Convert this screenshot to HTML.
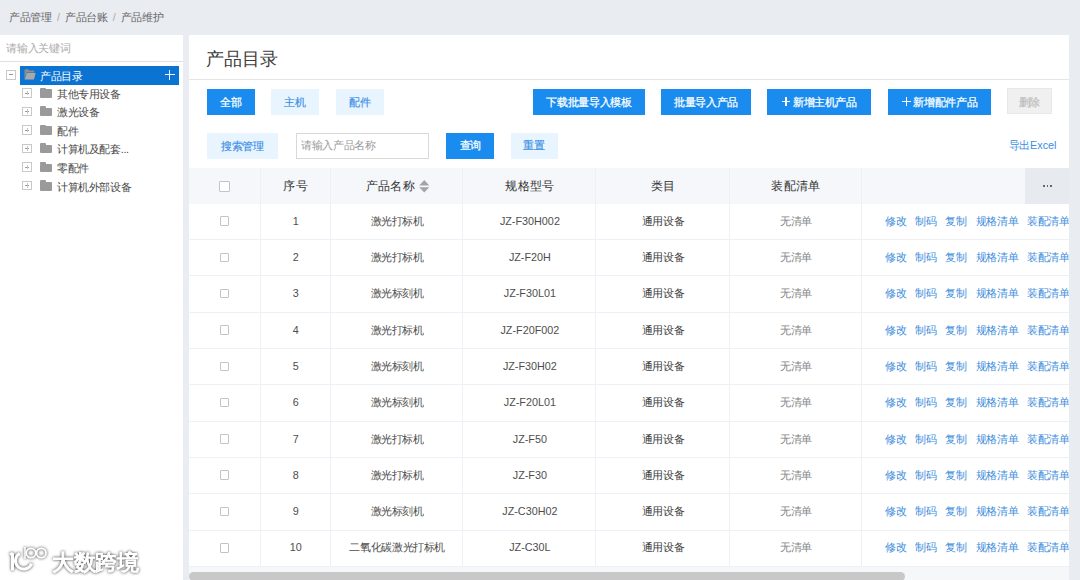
<!DOCTYPE html><html><head><meta charset="utf-8"><style>
*{box-sizing:border-box;margin:0;padding:0}
html,body{width:1080px;height:580px;overflow:hidden;background:#e9ecf1;font-family:"Liberation Sans",sans-serif;font-size:10.8px;letter-spacing:-0.35px;color:#606266}
.lat{letter-spacing:0}
.abs{position:absolute}
.sl{color:#aaa;margin:0 5.3px}
.crumb{left:9px;top:8px;line-height:18px;color:#666;white-space:pre}
#left{left:0;top:35px;width:183.3px;height:545px;background:#fff}
#left .ph{left:6.3px;top:4px;line-height:18px;color:#aaa}
#left .sep{left:0;top:26px;width:183.3px;height:1px;background:#dcdfe6}
.node{position:absolute;height:18px;line-height:18px;white-space:nowrap;color:#4a4a4a}
.selbg{position:absolute;background:#0b74d2}
.box{position:absolute;width:9.5px;height:9.5px;border:1px solid #c9c9c9;background:#fff}
.box:before{content:"";position:absolute;left:1.5px;right:1.5px;top:3.4px;height:1px;background:#999}
.box.p:after{content:"";position:absolute;top:1.5px;bottom:1.5px;left:3.4px;width:1px;background:#c4c4c4}
.fold{position:absolute;width:12.3px;height:8.6px;background:#9a9a9a;border-radius:1px}
.fold:before{content:"";position:absolute;left:0;top:-1.7px;width:6px;height:2.5px;background:#9a9a9a;border-radius:1px 1px 0 0}
#right{left:189.3px;top:35px;width:880.2px;height:545px;background:#fff;overflow:hidden}
.title{left:17px;top:9px;font-size:18px;line-height:30px;color:#3d3d3d;letter-spacing:0}
.tsep{left:0;top:44.4px;width:100%;height:1px;background:#e6e6e6}
.btn{position:absolute;height:26.3px;line-height:26.3px;text-align:center;white-space:nowrap}
.pri{background:#1a8cf0;color:#fff;-webkit-text-stroke:0.25px #fff}
.lt{background:#e8f4fe;color:#3a8ee6;-webkit-text-stroke:0.15px #3a8ee6}
.dis{background:#f0f0f0;color:#bdbdbd;border:1px solid #e8e8e8;-webkit-text-stroke:0.2px #bdbdbd}
.inp{position:absolute;border:1px solid #d9d9d9;color:#999;line-height:24px;padding-left:4.2px}
.link{position:absolute;color:#3a8ee6;right:13px;line-height:18px}
.th{position:absolute;top:133.2px;height:35.3px;background:#f5f7fa}
.thd{position:absolute;top:133.2px;height:35.3px;background:#e7eaef}
.vl{position:absolute;width:1px;background:#edf0f5}
.hl{position:absolute;height:1px;background:#edf0f5;left:0}
.c{position:absolute;text-align:center;white-space:nowrap;line-height:18px;color:#4d4d4d}
.hd{color:#333;font-size:12.4px;letter-spacing:0.3px}
.cb{position:absolute;width:9.5px;height:9.5px;border:1px solid #c0c4cc;background:#fff;border-radius:1px}
.act{position:absolute;color:#3d8ddc;white-space:nowrap;line-height:18px}
.pl{position:absolute;left:14.3px;top:8.8px;width:8.8px;height:8.8px}
.pl:before{content:'';position:absolute;left:0;right:0;top:3.75px;height:1.3px;background:#fff}
.pl:after{content:'';position:absolute;top:0;bottom:0;left:3.75px;width:1.3px;background:#fff}
.sb{position:absolute;left:0;top:537px;width:715px;height:9px;background:#c8c8c8;border-radius:5px}
</style></head><body><div class="abs crumb">产品管理<span class="sl">/</span>产品台账<span class="sl">/</span>产品维护</div>
<div id="left" class="abs"><div class="abs ph">请输入关键词</div><div class="abs sep"></div><div class="box" style="left:6.2px;top:35px;width:9.7px;height:9.7px"></div><div class="selbg" style="left:20.2px;top:31.2px;width:158.6px;height:18.6px"></div><svg class="abs" style="left:24px;top:34px" width="12" height="11" viewBox="0 0 12 11"><path d="M0.5 1.2 Q0.5 0.3 1.3 0.3 H4.2 L5.2 1.5 H9.6 Q10.3 1.5 10.3 2.2 V3.6 H2.6 L0.5 10 Z" fill="#8e8e8e"/><path d="M2.8 4 H11.6 L10 10.6 H0.6 Z" fill="#a9a9a9"/></svg><div class="node" style="left:40px;top:31.5px;color:#fff">产品目录</div><div class="abs" style="left:164.6px;width:10.4px;height:1.1px;background:#eef5fc;top:39.4px"></div><div class="abs" style="left:169.3px;top:35px;width:1.1px;height:9.9px;background:#eef5fc"></div><div class="box p" style="left:22.2px;top:53.20px"></div><div class="fold" style="left:39.5px;top:54.40px"></div><div class="node" style="left:56.9px;top:49.90px">其他专用设备</div><div class="box p" style="left:22.2px;top:71.70px"></div><div class="fold" style="left:39.5px;top:72.90px"></div><div class="node" style="left:56.9px;top:68.40px">激光设备</div><div class="box p" style="left:22.2px;top:90.20px"></div><div class="fold" style="left:39.5px;top:91.40px"></div><div class="node" style="left:56.9px;top:86.90px">配件</div><div class="box p" style="left:22.2px;top:108.70px"></div><div class="fold" style="left:39.5px;top:109.90px"></div><div class="node" style="left:56.9px;top:105.40px">计算机及配套...</div><div class="box p" style="left:22.2px;top:127.30px"></div><div class="fold" style="left:39.5px;top:128.50px"></div><div class="node" style="left:56.9px;top:124.00px">零配件</div><div class="box p" style="left:22.2px;top:145.80px"></div><div class="fold" style="left:39.5px;top:147.00px"></div><div class="node" style="left:56.9px;top:142.50px">计算机外部设备</div></div>
<div id="right" class="abs"><div class="abs title">产品目录</div><div class="abs tsep"></div><div class="btn pri" style="left:17.80px;top:53.50px;width:48.00px;height:26.30px;line-height:26.30px;">全部</div><div class="btn lt" style="left:81.70px;top:53.50px;width:47.70px;height:26.30px;line-height:26.30px;">主机</div><div class="btn lt" style="left:146.50px;top:53.50px;width:48.10px;height:26.30px;line-height:26.30px;">配件</div><div class="btn pri" style="left:343.90px;top:53.70px;width:111.50px;height:26.20px;line-height:26.20px;">下载批量导入模板</div><div class="btn pri" style="left:471.70px;top:53.70px;width:90.10px;height:26.20px;line-height:26.20px;">批量导入产品</div><div class="btn pri" style="left:578.00px;top:53.50px;width:103.40px;height:26.10px;line-height:26.10px;text-align:left;padding-left:25.6px"><span class="pl"></span>新增主机产品</div><div class="btn pri" style="left:698.50px;top:53.50px;width:103.20px;height:26.10px;line-height:26.10px;text-align:left;padding-left:25.6px"><span class="pl"></span>新增配件产品</div><div class="btn dis" style="left:818.10px;top:52.90px;width:44.20px;height:26.00px;line-height:26.00px;">删除</div><div class="btn lt" style="left:17.80px;top:98.00px;width:70.80px;height:26.20px;line-height:26.20px;">搜索管理</div><div class="inp" style="left:106.70px;top:98.10px;width:133.3px;height:25.8px;line-height:23.8px">请输入产品名称</div><div class="btn pri" style="left:257.10px;top:98.20px;width:48.00px;height:25.70px;line-height:25.70px;">查询</div><div class="btn lt" style="left:321.30px;top:98.20px;width:47.00px;height:25.70px;line-height:25.70px;">重置</div><div class="link" style="top:101.00px">导出<span class="lat">Excel</span></div><div class="th" style="left:0;width:835.90px;top:133.20px;height:35.60px"></div><div class="thd" style="left:835.90px;width:44.30px;top:133.20px;height:35.60px"></div><div class="vl" style="left:70.30px;top:133.20px;height:411.80px"></div><div class="vl" style="left:140.60px;top:133.20px;height:411.80px"></div><div class="vl" style="left:273.20px;top:133.20px;height:411.80px"></div><div class="vl" style="left:406.00px;top:133.20px;height:411.80px"></div><div class="vl" style="left:539.50px;top:133.20px;height:411.80px"></div><div class="vl" style="left:671.80px;top:133.20px;height:411.80px"></div><div class="hl" style="top:204.10px;width:880.20px"></div><div class="hl" style="top:240.40px;width:880.20px"></div><div class="hl" style="top:276.70px;width:880.20px"></div><div class="hl" style="top:313.00px;width:880.20px"></div><div class="hl" style="top:349.30px;width:880.20px"></div><div class="hl" style="top:385.60px;width:880.20px"></div><div class="hl" style="top:421.90px;width:880.20px"></div><div class="hl" style="top:458.20px;width:880.20px"></div><div class="hl" style="top:494.50px;width:880.20px"></div><div class="hl" style="top:530.80px;width:880.20px"></div><div class="cb" style="left:30.20px;top:146.00px;width:10.5px;height:10.5px"></div><div class="c hd" style="left:71.30px;width:70.30px;top:142.05px;">序号</div><div class="c hd" style="left:141.60px;width:132.60px;top:142.05px;">产品名称 <span style="display:inline-block;width:10px"></span></div><svg class="abs" style="left:229.90px;top:144.50px" width="11" height="13" viewBox="0 0 11 13"><path d="M0.2 5.5 L5.25 0.1 L10.3 5.5Z M0.2 7.3 L5.25 12.5 L10.3 7.3Z" fill="#a4a4a4"/></svg><div class="c hd" style="left:274.20px;width:132.80px;top:142.05px;">规格型号</div><div class="c hd" style="left:407.00px;width:133.50px;top:142.05px;">类目</div><div class="c hd" style="left:540.50px;width:132.30px;top:142.05px;">装配清单</div><div class="abs" style="left:853.90px;top:150.30px;width:1.7px;height:1.7px;background:#666"></div><div class="abs" style="left:857.40px;top:150.30px;width:1.7px;height:1.7px;background:#666"></div><div class="abs" style="left:860.90px;top:150.30px;width:1.7px;height:1.7px;background:#666"></div><div class="cb" style="left:30.70px;top:181.35px"></div><div class="c lat" style="left:71.30px;width:70.30px;top:176.75px;">1</div><div class="c" style="left:141.60px;width:132.60px;top:176.75px;">激光打标机</div><div class="c lat" style="left:274.20px;width:132.80px;top:176.75px;">JZ-F30H002</div><div class="c" style="left:407.00px;width:133.50px;top:176.75px;color:#404040">通用设备</div><div class="c" style="left:540.50px;width:132.30px;top:176.75px;color:#858585">无清单</div><div class="act" style="left:695.70px;top:176.75px">修改</div><div class="act" style="left:725.60px;top:176.75px">制码</div><div class="act" style="left:755.80px;top:176.75px">复制</div><div class="act" style="left:786.30px;top:176.75px">规格清单</div><div class="act" style="left:837.60px;top:176.75px">装配清单</div><div class="cb" style="left:30.70px;top:217.65px"></div><div class="c lat" style="left:71.30px;width:70.30px;top:213.05px;">2</div><div class="c" style="left:141.60px;width:132.60px;top:213.05px;">激光打标机</div><div class="c lat" style="left:274.20px;width:132.80px;top:213.05px;">JZ-F20H</div><div class="c" style="left:407.00px;width:133.50px;top:213.05px;color:#404040">通用设备</div><div class="c" style="left:540.50px;width:132.30px;top:213.05px;color:#858585">无清单</div><div class="act" style="left:695.70px;top:213.05px">修改</div><div class="act" style="left:725.60px;top:213.05px">制码</div><div class="act" style="left:755.80px;top:213.05px">复制</div><div class="act" style="left:786.30px;top:213.05px">规格清单</div><div class="act" style="left:837.60px;top:213.05px">装配清单</div><div class="cb" style="left:30.70px;top:253.95px"></div><div class="c lat" style="left:71.30px;width:70.30px;top:249.35px;">3</div><div class="c" style="left:141.60px;width:132.60px;top:249.35px;">激光标刻机</div><div class="c lat" style="left:274.20px;width:132.80px;top:249.35px;">JZ-F30L01</div><div class="c" style="left:407.00px;width:133.50px;top:249.35px;color:#404040">通用设备</div><div class="c" style="left:540.50px;width:132.30px;top:249.35px;color:#858585">无清单</div><div class="act" style="left:695.70px;top:249.35px">修改</div><div class="act" style="left:725.60px;top:249.35px">制码</div><div class="act" style="left:755.80px;top:249.35px">复制</div><div class="act" style="left:786.30px;top:249.35px">规格清单</div><div class="act" style="left:837.60px;top:249.35px">装配清单</div><div class="cb" style="left:30.70px;top:290.25px"></div><div class="c lat" style="left:71.30px;width:70.30px;top:285.65px;">4</div><div class="c" style="left:141.60px;width:132.60px;top:285.65px;">激光打标机</div><div class="c lat" style="left:274.20px;width:132.80px;top:285.65px;">JZ-F20F002</div><div class="c" style="left:407.00px;width:133.50px;top:285.65px;color:#404040">通用设备</div><div class="c" style="left:540.50px;width:132.30px;top:285.65px;color:#858585">无清单</div><div class="act" style="left:695.70px;top:285.65px">修改</div><div class="act" style="left:725.60px;top:285.65px">制码</div><div class="act" style="left:755.80px;top:285.65px">复制</div><div class="act" style="left:786.30px;top:285.65px">规格清单</div><div class="act" style="left:837.60px;top:285.65px">装配清单</div><div class="cb" style="left:30.70px;top:326.55px"></div><div class="c lat" style="left:71.30px;width:70.30px;top:321.95px;">5</div><div class="c" style="left:141.60px;width:132.60px;top:321.95px;">激光标刻机</div><div class="c lat" style="left:274.20px;width:132.80px;top:321.95px;">JZ-F30H02</div><div class="c" style="left:407.00px;width:133.50px;top:321.95px;color:#404040">通用设备</div><div class="c" style="left:540.50px;width:132.30px;top:321.95px;color:#858585">无清单</div><div class="act" style="left:695.70px;top:321.95px">修改</div><div class="act" style="left:725.60px;top:321.95px">制码</div><div class="act" style="left:755.80px;top:321.95px">复制</div><div class="act" style="left:786.30px;top:321.95px">规格清单</div><div class="act" style="left:837.60px;top:321.95px">装配清单</div><div class="cb" style="left:30.70px;top:362.85px"></div><div class="c lat" style="left:71.30px;width:70.30px;top:358.25px;">6</div><div class="c" style="left:141.60px;width:132.60px;top:358.25px;">激光标刻机</div><div class="c lat" style="left:274.20px;width:132.80px;top:358.25px;">JZ-F20L01</div><div class="c" style="left:407.00px;width:133.50px;top:358.25px;color:#404040">通用设备</div><div class="c" style="left:540.50px;width:132.30px;top:358.25px;color:#858585">无清单</div><div class="act" style="left:695.70px;top:358.25px">修改</div><div class="act" style="left:725.60px;top:358.25px">制码</div><div class="act" style="left:755.80px;top:358.25px">复制</div><div class="act" style="left:786.30px;top:358.25px">规格清单</div><div class="act" style="left:837.60px;top:358.25px">装配清单</div><div class="cb" style="left:30.70px;top:399.15px"></div><div class="c lat" style="left:71.30px;width:70.30px;top:394.55px;">7</div><div class="c" style="left:141.60px;width:132.60px;top:394.55px;">激光打标机</div><div class="c lat" style="left:274.20px;width:132.80px;top:394.55px;">JZ-F50</div><div class="c" style="left:407.00px;width:133.50px;top:394.55px;color:#404040">通用设备</div><div class="c" style="left:540.50px;width:132.30px;top:394.55px;color:#858585">无清单</div><div class="act" style="left:695.70px;top:394.55px">修改</div><div class="act" style="left:725.60px;top:394.55px">制码</div><div class="act" style="left:755.80px;top:394.55px">复制</div><div class="act" style="left:786.30px;top:394.55px">规格清单</div><div class="act" style="left:837.60px;top:394.55px">装配清单</div><div class="cb" style="left:30.70px;top:435.45px"></div><div class="c lat" style="left:71.30px;width:70.30px;top:430.85px;">8</div><div class="c" style="left:141.60px;width:132.60px;top:430.85px;">激光打标机</div><div class="c lat" style="left:274.20px;width:132.80px;top:430.85px;">JZ-F30</div><div class="c" style="left:407.00px;width:133.50px;top:430.85px;color:#404040">通用设备</div><div class="c" style="left:540.50px;width:132.30px;top:430.85px;color:#858585">无清单</div><div class="act" style="left:695.70px;top:430.85px">修改</div><div class="act" style="left:725.60px;top:430.85px">制码</div><div class="act" style="left:755.80px;top:430.85px">复制</div><div class="act" style="left:786.30px;top:430.85px">规格清单</div><div class="act" style="left:837.60px;top:430.85px">装配清单</div><div class="cb" style="left:30.70px;top:471.75px"></div><div class="c lat" style="left:71.30px;width:70.30px;top:467.15px;">9</div><div class="c" style="left:141.60px;width:132.60px;top:467.15px;">激光标刻机</div><div class="c lat" style="left:274.20px;width:132.80px;top:467.15px;">JZ-C30H02</div><div class="c" style="left:407.00px;width:133.50px;top:467.15px;color:#404040">通用设备</div><div class="c" style="left:540.50px;width:132.30px;top:467.15px;color:#858585">无清单</div><div class="act" style="left:695.70px;top:467.15px">修改</div><div class="act" style="left:725.60px;top:467.15px">制码</div><div class="act" style="left:755.80px;top:467.15px">复制</div><div class="act" style="left:786.30px;top:467.15px">规格清单</div><div class="act" style="left:837.60px;top:467.15px">装配清单</div><div class="cb" style="left:30.70px;top:508.05px"></div><div class="c lat" style="left:71.30px;width:70.30px;top:503.45px;">10</div><div class="c" style="left:141.60px;width:132.60px;top:503.45px;">二氧化碳激光打标机</div><div class="c lat" style="left:274.20px;width:132.80px;top:503.45px;">JZ-C30L</div><div class="c" style="left:407.00px;width:133.50px;top:503.45px;color:#404040">通用设备</div><div class="c" style="left:540.50px;width:132.30px;top:503.45px;color:#858585">无清单</div><div class="act" style="left:695.70px;top:503.45px">修改</div><div class="act" style="left:725.60px;top:503.45px">制码</div><div class="act" style="left:755.80px;top:503.45px">复制</div><div class="act" style="left:786.30px;top:503.45px">规格清单</div><div class="act" style="left:837.60px;top:503.45px">装配清单</div><div class="abs" style="left:0;top:531.50px;width:880.20px;height:20px;background:#f6f7f9"></div><div class="sb" style="top:537.20px;width:715.70px"></div></div>
<svg class="abs" style="left:0;top:535px;filter:drop-shadow(0 0 1.8px rgba(0,0,0,.8))" width="160" height="45" viewBox="0 0 160 45"><g fill="none" stroke="#fff" stroke-linecap="butt"><path d="M12.5 35.5 V18.2 L10.2 20.2" stroke-width="3" stroke-linejoin="bevel"/><path d="M19.8 18.4 A8.3 8.3 0 1 0 31.6 28.4" stroke-width="3"/><path d="M25 12 V23.7" stroke-width="1.6"/><circle cx="31" cy="18" r="4.7" stroke-width="1.8"/><circle cx="41.3" cy="18" r="4.7" stroke-width="1.8"/></g><text x="52" y="34.5" font-size="22" font-weight="normal" fill="#fff" stroke="#fff" stroke-width="1.1" stroke-linejoin="round" font-family="Liberation Sans, sans-serif">大数跨境</text></svg></body></html>
